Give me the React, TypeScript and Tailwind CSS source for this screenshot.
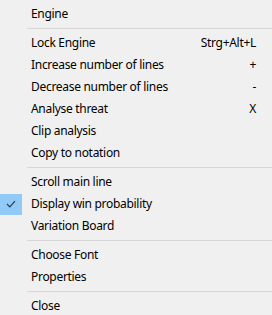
const rows: ({ label: string; key?: string; checked?: boolean } | "sep")[] = [
  { label: "Engine" },
  "sep",
  { label: "Lock Engine", key: "Strg+Alt+L" },
  { label: "Increase number of lines", key: "+" },
  { label: "Decrease number of lines", key: "-" },
  { label: "Analyse threat", key: "X" },
  { label: "Clip analysis" },
  { label: "Copy to notation" },
  "sep",
  { label: "Scroll main line" },
  { label: "Display win probability", checked: true },
  { label: "Variation Board" },
  "sep",
  { label: "Choose Font" },
  { label: "Properties" },
  "sep",
  { label: "Close" },
];

export default function App() {
  return (
    <div className="w-[272px] h-[315px] overflow-hidden bg-[#f0f0f0] pt-[3px] text-[12px] tracking-[-0.3px] text-black font-['Segoe_UI','Noto_Sans',sans-serif]">
      {rows.map((r, i) =>
        r === "sep" ? (
          <div key={i} className="h-[7px] flex items-center pl-[27px]">
            <div className="h-px w-full bg-[#d7d7d7]" />
          </div>
        ) : (
          <div key={i} className="h-[22px] flex items-center pr-[16px]">
            <div className="w-[31px] h-full flex items-center">
              {r.checked && (
                <div className="w-[22px] h-[21px] bg-[#91c9f7] flex items-center justify-center">
                  <svg width="10" height="8" viewBox="0 0 10 8">
                    <path d="M1 4 L3.8 6.8 L9 1.2" fill="none" stroke="#2f3b45" strokeWidth="1.2" />
                  </svg>
                </div>
              )}
            </div>
            <span className="flex-1 leading-none">{r.label}</span>
            {r.key && <span className="leading-none">{r.key}</span>}
          </div>
        )
      )}
    </div>
  );
}
